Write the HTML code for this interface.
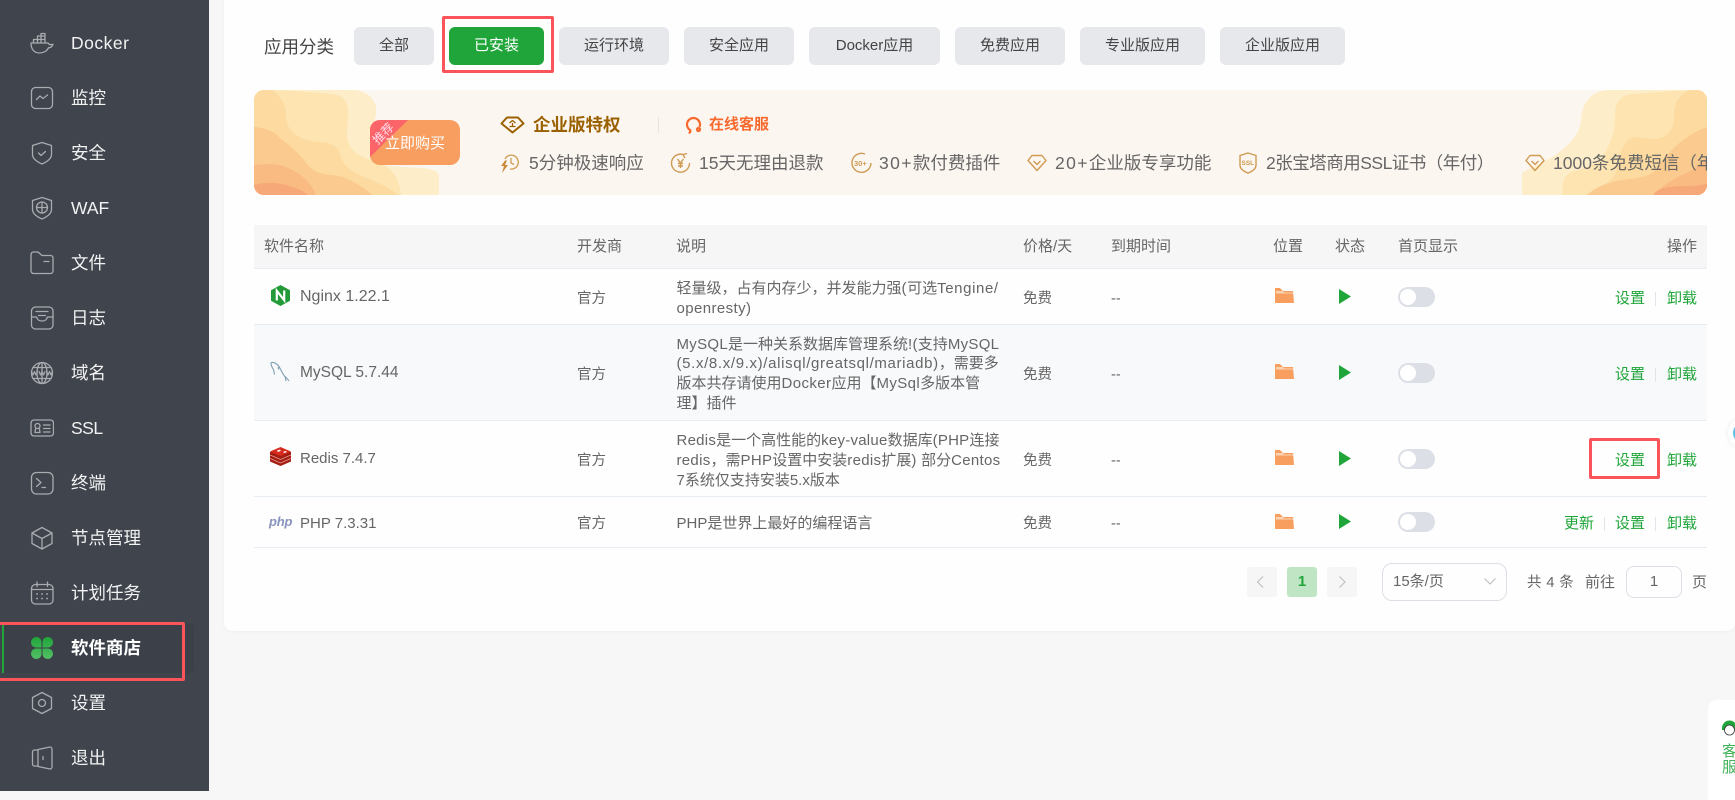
<!DOCTYPE html>
<html lang="zh-CN"><head><meta charset="utf-8"><title>软件商店</title>
<style>
*{box-sizing:border-box}
html,body{margin:0;padding:0;width:1735px;height:791px;overflow:hidden;background:#f7f7f7;font-family:"Liberation Sans","Noto Sans CJK SC",sans-serif;color:#666}
.t{position:absolute;white-space:nowrap;line-height:20px;font-size:15px}
.a{position:absolute}
#side{position:absolute;left:0;top:0;width:209px;height:791px;background:#3f444d}
.m{position:absolute;left:71px;font-size:17.5px;line-height:24px;color:#f2f2f2;white-space:nowrap}
#side svg{position:absolute;left:30px;width:24px;height:24px;fill:none;stroke:#a9abaf;stroke-width:1.3;stroke-linecap:round;stroke-linejoin:round}
#card{position:absolute;left:224px;top:-10px;width:1511px;height:641px;background:#fefefe;border-radius:8px;box-shadow:0 1px 4px rgba(0,0,0,.03)}
.b{position:absolute;top:27px;height:38px;background:#e7e8ec;border-radius:6px;color:#444;font-size:15px;line-height:38px;text-align:center;white-space:nowrap}
.red{position:absolute;border:3px solid #fc545b;border-radius:2px}
#ban{position:absolute;left:254px;top:90px;width:1453px;height:105px;background:#fcf6f1;border-radius:10px;overflow:hidden}
.f{color:#666;font-size:17.5px}
.g{color:#20a53a}
.line{position:absolute;left:254px;width:1453px;height:1px;background:#e8ecf3}
.c{font-size:14.5px;color:#666}
.d{color:#666;font-size:15px}
.h{color:#666;font-size:15px}
.sw{position:absolute;left:1398px;width:37px;height:20px;border-radius:10px;background:#dcdfe6}
.sw i{position:absolute;left:2px;top:2px;width:16px;height:16px;border-radius:8px;background:#fff}
.div{position:absolute;width:1px;height:14px;background:#e2e4ea}
</style></head><body>

<div id="side">
<svg style="top:31px" viewBox="0 0 24 24"><path d="M1 12h17c.6 1.500 2.500 2 5 1.300-.7 2.200-2.500 3.400-4.500 3.500C17 20 13.500 22 9.500 22 4 22 1 18 1 12z"/><path d="M3.500 12V8.500h11.500V12M7.500 8.500V5h7.500v3.500M11 5V2.500h4V5M7.500 8.500V12M11 8.500V12M11 5v3.500"/></svg>
<div class="m" style="top:31px;letter-spacing:.5px">Docker</div>
<svg style="top:86px" viewBox="0 0 24 24"><rect x="1.500" y="1.500" width="21" height="21" rx="4"/><path d="M6.500 13.500l3.500-3.500 3 2.500 4.500-3.500"/></svg>
<div class="m" style="top:86px">监控</div>
<svg style="top:141px" viewBox="0 0 24 24"><path d="M12 1.500l9.500 3v9c0 4.500-5 7.500-9.500 9.500-4.500-2-9.500-5-9.500-9.500v-9z"/><path d="M8.500 12l2.500 2.500 4.500-4"/></svg>
<div class="m" style="top:141px">安全</div>
<svg style="top:196px" viewBox="0 0 24 24"><path d="M12 1.500l9.500 3v9c0 4.500-5 7.500-9.500 9.500-4.500-2-9.500-5-9.500-9.500v-9z"/><circle cx="12" cy="11.500" r="5.500"/><path d="M6.500 11.500h11M12 6v11"/></svg>
<div class="m" style="top:196px">WAF</div>
<svg style="top:251px" viewBox="0 0 24 24"><path d="M1 3.500A2.500 2.500 0 0 1 3.500 1H8l4 3.500h8.500A2.500 2.500 0 0 1 23 7v13a2.500 2.500 0 0 1-2.500 2.500h-17A2.500 2.500 0 0 1 1 20z"/><path d="M14 10.500h5"/></svg>
<div class="m" style="top:251px">文件</div>
<svg style="top:306px" viewBox="0 0 24 24"><rect x="1.500" y="1" width="21.500" height="22" rx="4"/><path d="M6 5.500h12M8.500 9.500h7M1.500 11h5c1 3 2.500 4 5.500 4s4.500-1 5.500-4h5.500"/></svg>
<div class="m" style="top:306px">日志</div>
<svg style="top:361px" viewBox="0 0 24 24"><circle cx="12" cy="12" r="10.500"/><ellipse cx="12" cy="12" rx="5" ry="10.500"/><path d="M3 6.500h18M3 17.500h18M12 1.500v21"/><path d="M1.500 10.500l1.500 3.500 1.500-3.500 1.500 3.500 1.500-3.500M9 10.500l1.500 3.500 1.500-3.500 1.500 3.500 1.500-3.500M16.500 10.500l1.500 3.500 1.500-3.500 1.500 3.500 1.500-3.500" stroke-width="1.200"/></svg>
<div class="m" style="top:361px">域名</div>
<svg style="top:416px" viewBox="0 0 24 24"><rect x="1" y="4" width="22.500" height="16" rx="3"/><circle cx="7.500" cy="10" r="2.500"/><path d="M5.500 13l-.5 3.500h5L9.500 13M13.500 9h6.500M13.500 12.500h6.500M13.500 16h6.500"/></svg>
<div class="m" style="top:416px;letter-spacing:-.5px">SSL</div>
<svg style="top:471px" viewBox="0 0 24 24"><rect x="1.500" y="1.500" width="21.500" height="21.500" rx="5"/><path d="M6.500 7.500l4.500 4-4.500 4M12 16.500h3.500"/></svg>
<div class="m" style="top:471px">终端</div>
<svg style="top:526px" viewBox="0 0 24 24"><path d="M12 1.500l10 5.500v10.500L12 23 2 17.500V7z"/><path d="M2 7l10 5.500L22 7M12 12.500V23"/></svg>
<div class="m" style="top:526px">节点管理</div>
<svg style="top:581px" viewBox="0 0 24 24"><rect x="1.500" y="3.500" width="21.500" height="19.500" rx="4"/><path d="M1.500 8.500h21.500M7 1v4.500M17.500 1v4.500"/><path d="M7 13h.1M12 13h.1M17 13h.1M7 17.500h.1M12 17.500h.1M17 17.500h.1" stroke-width="1.800"/></svg>
<div class="m" style="top:581px">计划任务</div>

<div class="a" style="left:2px;top:623px;width:192px;height:50px;background:#3b4049;border-radius:0 5px 5px 0"></div>
<div class="a" style="left:2px;top:623px;width:2px;height:50px;background:#20a53a"></div>
<svg style="top:636px;stroke:none" viewBox="0 0 24 24"><defs><linearGradient id="gr" x1="0" y1="0" x2="0" y2="1"><stop offset="0" stop-color="#20a53a"/><stop offset="1" stop-color="#54c066"/></linearGradient></defs><path fill="url(#gr)" d="M1 6.500A5.500 5.500 0 0 1 6.500 1 5 5 0 0 1 11.500 6v5.500H6a5 5 0 0 1-5-5zM12.500 6a5 5 0 0 1 5-5A5.500 5.500 0 0 1 23 6.500 5 5 0 0 1 18 11.500h-5.500zM1 17.500A5 5 0 0 1 6 12.500h5.500V18a5 5 0 0 1-5 5A5.500 5.500 0 0 1 1 17.500zM12.500 12.500H18a5 5 0 0 1 5 5A5.500 5.500 0 0 1 17.500 23a5 5 0 0 1-5-5z"/></svg>
<div class="m" style="top:636px;font-weight:700;color:#fff">软件商店</div>
<div class="red" style="left:-4px;top:622px;width:189px;height:59px"></div>

<svg style="top:691px" viewBox="0 0 24 24"><path d="M12 1.500l9.500 5v11l-9.500 5-9.500-5v-11z"/><circle cx="12" cy="12" r="3.500"/></svg>
<div class="m" style="top:691px">设置</div>
<svg style="top:746px" viewBox="0 0 24 24"><path d="M8 4H4.500A2 2 0 0 0 2.500 6v12a2 2 0 0 0 2 2H8"/><path d="M8 3.500l12-2.500a2 2 0 0 1 2 2v18a2 2 0 0 1-2 2L8 20.500z"/><path d="M13 10.500v3"/></svg>
<div class="m" style="top:746px">退出</div>
</div>

<div id="card"></div>

<div class="t" style="left:264px;top:37px;font-size:17.5px;color:#444">应用分类</div>
<div class="b" style="left:354px;width:80px">全部</div>
<div class="b" style="left:449px;width:95px;background:#20a53a;color:#fff">已安装</div>
<div class="red" style="left:442px;top:16px;width:112px;height:57px"></div>
<div class="b" style="left:559px;width:110px">运行环境</div>
<div class="b" style="left:684px;width:110px">安全应用</div>
<div class="b" style="left:809px;width:131px">Docker应用</div>
<div class="b" style="left:955px;width:110px">免费应用</div>
<div class="b" style="left:1080px;width:125px">专业版应用</div>
<div class="b" style="left:1220px;width:125px">企业版应用</div>

<div id="ban">
<svg class="a" style="left:0;top:0" width="185" height="105" viewBox="0 0 185 105">
<path fill="#fdedc8" d="M0 0H101C116 2 124 12 122 24 120 36 115 55 118 68 122 76 135 76 150 77 170 78 185 78 185 86V105H0z"/>
<path fill="#fde4b0" d="M0 0C30 0 65 2 83 5 92 8 95 15 94 28 93 40 91 50 97 58 104 68 120 70 134 78 142 84 146 95 147 105H0z"/>
<path fill="#fdda9f" d="M0 0H19C28 8 32 16 32 26 32 36 38 46 53 50 68 54 80 50 85 62 88 72 92 80 108 86 122 92 136 98 144 105H0z"/>
<path fill="#fbca8e" d="M0 37C10 38 18 40 25 47 33 54 42 60 50 70 55 78 62 84 78 85 92 86 106 95 119 105H0z"/>
<path fill="#f9bb82" d="M0 75C10 74 22 73 32 77 42 81 47 85 52 90 57 95 60 100 62 105H0z"/>
<path fill="#f7a878" d="M0 95C10 92 22 92 32 95 42 98 50 101 54 105H0z"/>
</svg>
<svg class="a" style="left:1268px;top:0" width="185" height="105" viewBox="0 0 185 105">
<path fill="#fdedc8" d="M0 105V83C12 76 28 70 40 60 52 50 58 42 59 30 60 12 70 0 88 0H185V105z"/>
<path fill="#fde4b0" d="M40 105C41 95 40 86 50 82 62 78 74 76 82 64 90 52 93 40 93 26 93 12 98 5 111 4 135 2 165 0 185 0V105z"/>
<path fill="#fdda9f" d="M65 105C75 98 92 92 95 80 97 68 98 60 106 50 112 44 125 50 135 49 148 46 152 38 152 26 152 12 158 4 168 0H185V105z"/>
<path fill="#fbca8e" d="M65 105C75 96 88 92 100 90 115 88 128 88 135 78 143 66 160 46 185 37V105z"/>
<path fill="#f9bb82" d="M131 105C140 96 150 90 162 84 172 80 180 72 185 67V105z"/>
<path fill="#f7a878" d="M131 105C136 98 145 97 158 96 170 96 180 96 185 93V105z"/>
</svg>
</div>

<div class="a" style="left:370px;top:120px;width:90px;height:45px;background:#f79e60;border-radius:10px;overflow:hidden">
<svg class="a" style="left:0;top:0" width="40" height="38"><path fill="#fb6469" d="M0 0H38L0 37z"/></svg>
<div class="t" style="left:1px;top:3px;width:26px;font-size:12px;color:#fde;transform:rotate(-45deg)">推荐</div>
<div class="t" style="left:15px;top:14px;font-size:15px;color:#fff">立即购买</div>
</div>

<svg class="a" style="left:500px;top:116px" width="25" height="18" viewBox="0 0 25 18" fill="none" stroke="#9b6100" stroke-width="2" stroke-linejoin="round"><path d="M7 1.500h11l5.500 6L12.500 16.500 1.500 7.500z"/><path d="M9.500 7l3-2.500 3 2.500M9.500 10.500h6M12.500 7v3.500" stroke-width="1.300"/></svg>
<div class="t" style="left:533px;top:115px;font-size:17.500px;font-weight:700;color:#9b6100">企业版特权</div>
<div class="a" style="left:658px;top:117px;width:1px;height:16px;background:#e4e4e4"></div>
<svg class="a" style="left:685px;top:116px" width="20" height="19" viewBox="0 0 20 19" fill="none" stroke="#f7692d" stroke-width="2.200"><path d="M6 14.500a6.500 6.500 0 1 1 8.500-3.500"/><circle cx="13.500" cy="13.500" r="1.500"/><path d="M6 14.500l-2 3"/></svg>
<div class="t" style="left:709px;top:115px;font-weight:700;color:#f7692d">在线客服</div>

<svg class="a" style="left:500px;top:152px" width="20" height="22" viewBox="0 0 20 22" fill="none" stroke="#cf9a52" stroke-width="1.300"><path d="M5 7a7 7 0 1 1 5 10"/><path d="M11 6v5l3 1.500"/><path fill="#c98a3a" stroke="none" d="M5 8.500L1 14h3l-2 7 6-8H5l2-4.500z"/></svg>
<div class="t f" style="left:529px;top:153px">5分钟极速响应</div>
<svg class="a" style="left:670px;top:152px" width="21" height="22" viewBox="0 0 21 22" fill="none" stroke="#cf9a52" stroke-width="1.400"><path d="M19.500 11A9 9 0 1 1 13 2.500M13 2.500l4-1M13 2.500l2 3.500"/><path d="M7.500 7l3 4 3-4M10.500 11v5M8 11.500h5M8 14h5"/></svg>
<div class="t f" style="left:699px;top:153px">15天无理由退款</div>
<svg class="a" style="left:851px;top:152px" width="21" height="22" viewBox="0 0 21 22" fill="none" stroke="#cf9a52" stroke-width="1.400"><path d="M20 11a9.500 9.500 0 1 1-6-9"/><text x="3" y="14" font-size="7.500" font-weight="700" fill="#cf9a52" stroke="none" font-family="Liberation Sans">30+</text></svg>
<div class="t f" style="left:879px;top:153px"><span style="letter-spacing:1.400px">30+</span>款付费插件</div>
<svg class="a" style="left:1027px;top:154px" width="20" height="18" viewBox="0 0 20 18" fill="none" stroke="#cf9a52" stroke-width="1.400" stroke-linejoin="round"><path d="M5 1.500h10l4 5-9 10-9-10z"/><path d="M6.500 7l3.500 3.500L13.500 7"/></svg>
<div class="t f" style="left:1055px;top:153px"><span style="letter-spacing:1.400px">20+</span>企业版专享功能</div>
<svg class="a" style="left:1239px;top:152px" width="18" height="22" viewBox="0 0 18 22" fill="none" stroke="#cf9a52" stroke-width="1.400"><path d="M9 1l8 2.500V13c0 4-4 6.500-8 8-4-1.500-8-4-8-8V3.500z"/><text x="2.500" y="13" font-size="6.500" font-weight="700" fill="#cf9a52" stroke="none" font-family="Liberation Sans">SSL</text></svg>
<div class="t f" style="left:1266px;top:153px;letter-spacing:-.5px">2张宝塔商用SSL证书（年付）</div>
<div class="a" style="left:254px;top:90px;width:1453px;height:105px;overflow:hidden">
<svg class="a" style="left:1271px;top:64px" width="20" height="18" viewBox="0 0 20 18" fill="none" stroke="#cf9a52" stroke-width="1.400" stroke-linejoin="round"><path d="M5 1.500h10l4 5-9 10-9-10z"/><path d="M6.500 7l3.500 3.500L13.500 7"/></svg>
<div class="t f" style="left:1299px;top:63px">1000条免费短信（年付）</div>
</div>

<div class="a" style="left:254px;top:225px;width:1453px;height:43px;background:#f6f6f6"></div>
<div class="a" style="left:254px;top:325px;width:1453px;height:95px;background:#f8f9fb"></div>
<div class="line" style="top:268px"></div><div class="line" style="top:324px"></div><div class="line" style="top:420px"></div><div class="line" style="top:496px"></div><div class="line" style="top:547px"></div>

<div class="t h" style="left:264px;top:237px">软件名称</div>
<div class="t h" style="left:577px;top:237px">开发商</div>
<div class="t h" style="left:676px;top:237px">说明</div>
<div class="t h" style="left:1023px;top:237px">价格/天</div>
<div class="t h" style="left:1111px;top:237px">到期时间</div>
<div class="t h" style="left:1273px;top:237px">位置</div>
<div class="t h" style="left:1335px;top:237px">状态</div>
<div class="t h" style="left:1398px;top:237px">首页显示</div>
<div class="t h" style="left:1667px;top:237px">操作</div>

<svg class="a" style="left:271px;top:285px" width="19" height="21" viewBox="0 0 19 21"><path fill="#229a37" d="M9.500 0L19 5.300v10.400L9.500 21 0 15.700V5.300z"/><path fill="none" stroke="#fff" stroke-width="2.200" d="M5.800 15.500V5.800l7.400 9.400V5.500"/></svg>
<div class="t" style="left:300px;top:287px;font-size:16px">Nginx 1.22.1</div>
<svg class="a" style="left:270px;top:361px" width="20" height="22" viewBox="0 0 20 22" fill="none" stroke="#7f9fb4" stroke-width="1.100"><path d="M1 1.500c3-.5 6 1 8 4 1.500 2.500 3 6 5 9 1.500 1.500 3.500 3 5 5.500"/><path d="M1 1.500c0 3 1 5 2.500 7M3.500 8.500l1 5M9 5.500c-1 1-1 2 0 3M15 15l1 5"/></svg>
<div class="t" style="left:300px;top:363px;font-size:15.500px">MySQL 5.7.44</div>
<svg class="a" style="left:270px;top:447px" width="21" height="19" viewBox="0 0 21 19"><path fill="#a41e11" d="M0 5v9.500L10.500 19 21 14.500V5z"/><path fill="#d82c20" d="M10.500 0L21 4.500 10.500 9 0 4.500z"/><path fill="none" stroke="#e8a09a" stroke-width=".8" d="M0 8l10.500 4.500L21 8M0 11.500L10.500 16 21 11.500"/><path fill="#fff" d="M7 3.500l3-1 .8 1.500-3 1zM13 5l2.500-1 1.500 1-2.500 1z"/></svg>
<div class="t" style="left:300px;top:449px;font-size:15px">Redis 7.4.7</div>
<div class="t" style="left:269px;top:512px;font-size:13px;font-weight:700;font-style:italic;color:#8893bd;letter-spacing:-.2px">php</div>
<div class="t" style="left:300px;top:514px;font-size:15px">PHP 7.3.31</div>

<div class="t c" style="left:577px;top:289px">官方</div>
<div class="t c" style="left:577px;top:365px">官方</div>
<div class="t c" style="left:577px;top:451px">官方</div>
<div class="t c" style="left:577px;top:514px">官方</div>

<div class="t d" style="left:676.500px;top:279px">轻量级，占有内存少，并发能力强<span style="letter-spacing:.6px">(</span>可选<span style="letter-spacing:.6px">Tengine/</span></div>
<div class="t d" style="left:676.500px;top:299px"><span style="letter-spacing:.4px">openresty)</span></div>
<div class="t d" style="left:676.500px;top:335px"><span style="letter-spacing:.3px">MySQL</span>是一种关系数据库管理系统<span style="letter-spacing:.3px">!(</span>支持<span style="letter-spacing:.3px">MySQL</span></div>
<div class="t d" style="left:676.500px;top:354px"><span style="letter-spacing:.65px">(5.x/8.x/9.x)/alisql/greatsql/mariadb)</span>，需要多</div>
<div class="t d" style="left:676.500px;top:374px">版本共存请使用<span style="letter-spacing:.4px">Docker</span>应用【<span style="letter-spacing:.4px">MySql</span>多版本管</div>
<div class="t d" style="left:676.500px;top:394px">理】插件</div>
<div class="t d" style="left:676.500px;top:431px"><span style="letter-spacing:.25px">Redis</span>是一个高性能的<span style="letter-spacing:.25px">key-value</span>数据库<span style="letter-spacing:.25px">(PHP</span>连接</div>
<div class="t d" style="left:676.500px;top:451px"><span style="letter-spacing:.3px">redis</span>，需<span style="letter-spacing:.3px">PHP</span>设置中安装<span style="letter-spacing:.3px">redis</span>扩展<span style="letter-spacing:.3px">) </span>部分<span style="letter-spacing:.3px">Centos</span></div>
<div class="t d" style="left:676.500px;top:471px">7系统仅支持安装5.x版本</div>
<div class="t d" style="left:676.500px;top:514px">PHP是世界上最好的编程语言</div>

<div class="t c" style="left:1023px;top:289px">免费</div>
<div class="t c" style="left:1023px;top:365px">免费</div>
<div class="t c" style="left:1023px;top:451px">免费</div>
<div class="t c" style="left:1023px;top:514px">免费</div>
<div class="t c" style="left:1111px;top:289px">--</div>
<div class="t c" style="left:1111px;top:365px">--</div>
<div class="t c" style="left:1111px;top:451px">--</div>
<div class="t c" style="left:1111px;top:514px">--</div>

<svg width="0" height="0" style="position:absolute"><defs><g id="fo"><path fill="#f89f5f" d="M0 2V0h5l3 3h10l1 12H0z"/><path fill="#fcd3b1" d="M1 3h7l1 1.500h9v1H1z"/></g><path id="pl" fill="#20a53a" d="M0 0l12 7.500L0 15z"/></defs></svg>
<svg class="a" style="left:1275px;top:288px" width="19" height="15"><use href="#fo"/></svg>
<svg class="a" style="left:1275px;top:364px" width="19" height="15"><use href="#fo"/></svg>
<svg class="a" style="left:1275px;top:450px" width="19" height="15"><use href="#fo"/></svg>
<svg class="a" style="left:1275px;top:514px" width="19" height="15"><use href="#fo"/></svg>
<svg class="a" style="left:1339px;top:289px" width="12" height="15"><use href="#pl"/></svg>
<svg class="a" style="left:1339px;top:365px" width="12" height="15"><use href="#pl"/></svg>
<svg class="a" style="left:1339px;top:451px" width="12" height="15"><use href="#pl"/></svg>
<svg class="a" style="left:1339px;top:514px" width="12" height="15"><use href="#pl"/></svg>
<div class="sw" style="top:287px"><i></i></div>
<div class="sw" style="top:363px"><i></i></div>
<div class="sw" style="top:449px"><i></i></div>
<div class="sw" style="top:512px"><i></i></div>

<div class="t g" style="left:1615px;top:289px">设置</div><div class="div" style="left:1655px;top:292px"></div><div class="t g" style="left:1667px;top:289px">卸载</div>
<div class="t g" style="left:1615px;top:365px">设置</div><div class="div" style="left:1655px;top:368px"></div><div class="t g" style="left:1667px;top:365px">卸载</div>
<div class="t g" style="left:1615px;top:451px">设置</div><div class="t g" style="left:1667px;top:451px">卸载</div>
<div class="red" style="left:1589px;top:438px;width:71px;height:41px"></div>
<div class="t g" style="left:1564px;top:514px">更新</div><div class="div" style="left:1604px;top:517px"></div><div class="t g" style="left:1615px;top:514px">设置</div><div class="div" style="left:1655px;top:517px"></div><div class="t g" style="left:1667px;top:514px">卸载</div>

<div class="a" style="left:1247px;top:567px;width:30px;height:30px;background:#f6f6f6;border-radius:3px"></div>
<svg class="a" style="left:1254px;top:575px" width="14" height="14" fill="none" stroke="#bbb" stroke-width="1"><path d="M9 1.500L3.500 7 9 12.500"/></svg>
<div class="a" style="left:1287px;top:567px;width:30px;height:30px;background:#bfe5c5;border-radius:3px;color:#20a53a;font-weight:700;font-size:15px;line-height:30px;text-align:center">1</div>
<div class="a" style="left:1327px;top:567px;width:30px;height:30px;background:#f6f6f6;border-radius:3px"></div>
<svg class="a" style="left:1335px;top:575px" width="14" height="14" fill="none" stroke="#bbb" stroke-width="1"><path d="M4.500 1.500L10 7l-5.500 5.500"/></svg>
<div class="a" style="left:1382px;top:563px;width:125px;height:38px;border:1px solid #dcdfe6;border-radius:10px"></div>
<div class="t" style="left:1393px;top:572px">15条/页</div>
<svg class="a" style="left:1484px;top:577px" width="12" height="9" fill="none" stroke="#bbb" stroke-width="1"><path d="M.5 1.500L6 7l5.500-5.500"/></svg>
<div class="t" style="left:1527px;top:573px;font-size:14.500px;letter-spacing:.4px">共 4 条</div>
<div class="t" style="left:1585px;top:573px">前往</div>
<div class="a" style="left:1626px;top:566px;width:56px;height:32px;border:1px solid #dcdfe6;border-radius:8px;text-align:center;line-height:30px;font-size:15px">1</div>
<div class="t" style="left:1692px;top:573px">页</div>

<div class="a" style="left:1728px;top:418px;width:30px;height:30px;border-radius:15px;background:#fff;box-shadow:0 0 6px rgba(0,0,0,.08)"></div>
<div class="a" style="left:1733px;top:423px;width:20px;height:20px;border-radius:10px;background:#5cc0ee"></div>

<div class="a" style="left:1708px;top:700px;width:40px;height:100px;background:#fff;border-radius:9px 0 0 0;overflow:hidden">
<svg class="a" style="left:14px;top:20px" width="20" height="17" viewBox="0 0 20 17" fill="none"><path fill="#20a53a" d="M0 8a7.500 7.500 0 0 1 15 0v2h-2C12 6 10 5 7.500 5S3 6 2 10H0z"/><circle cx="7.500" cy="10" r="5" stroke="#333" stroke-width=".8"/></svg>
<div class="t g" style="left:14px;top:42px;font-size:15px;color:#3fb257">客</div>
<div class="t g" style="left:14px;top:58px;font-size:15px;color:#3fb257">服</div>
</div>
</body></html>
